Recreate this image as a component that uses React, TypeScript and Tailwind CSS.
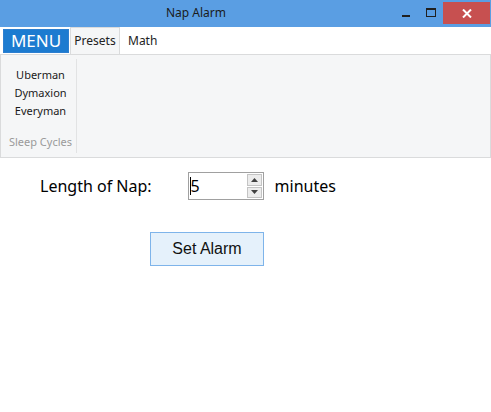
import { useState } from "react";

const presets = ["Uberman", "Dymaxion", "Everyman"];

export default function App() {
  const [minutes, setMinutes] = useState(5);

  return (
    <div className="flex h-[412px] w-[491px] flex-col bg-white font-['Noto_Sans','Open_Sans',sans-serif] text-black">
      {/* title bar */}
      <div className="relative flex h-[27px] shrink-0 items-start bg-[#5a9ee3]">
        <div className="w-[392px] pt-[4px] text-center text-[12px] leading-[18px] text-[#1b1b1b]">
          Nap Alarm
        </div>
        <div className="ml-auto flex items-start">
          <div className="flex h-[24px] w-[27px] items-center justify-center">
            <div className="mt-[7px] h-[2px] w-[8px] bg-[#202020]" />
          </div>
          <div className="flex h-[24px] w-[24px] items-center justify-center">
            <div className="h-[9px] w-[10px] border border-t-2 border-[#202020]" />
          </div>
          <div className="mr-[1px] mt-[2px] flex h-[22px] w-[47px] items-center justify-center bg-[#c75050]">
            <svg width="10" height="9" viewBox="0 0 10 9">
              <path d="M1 0.5 L9 8.5 M9 0.5 L1 8.5" stroke="white" strokeWidth="2" />
            </svg>
          </div>
        </div>
      </div>

      {/* menu row */}
      <div className="flex h-[27px] shrink-0 items-end">
        <button
          type="button"
          className="ml-[3px] mb-[1px] h-[24px] w-[66px] border border-[#2d7fd0] bg-[#1c7bd0] text-[17px] leading-[22px] text-white"
        >
          MENU
        </button>
        <div className="ml-[1px] flex h-[27px] w-[50px] items-center justify-center border border-b-0 border-[#dadbdc] bg-[#f5f6f7] text-[12px] text-[#222]">
          Presets
        </div>
        <div className="ml-[8px] flex h-[27px] items-center text-[12px] text-[#222]">Math</div>
      </div>

      {/* ribbon */}
      <div className="flex h-[104px] shrink-0 border border-[#dadbdc] bg-[#f5f6f7] px-[4px] pt-[4px]">
        <div className="flex h-[94px] w-[72px] flex-col items-center border-r border-[#e2e3e4]">
          <div className="mt-[7px] flex flex-col items-center gap-[1px] text-[11px] leading-[17px] text-[#1a1a1a]">
            {presets.map((p) => (
              <span key={p}>{p}</span>
            ))}
          </div>
          <div className="mt-auto mb-[3px] text-[11px] leading-[16px] text-[#9a9a9a]">Sleep Cycles</div>
        </div>
      </div>

      {/* content */}
      <div className="flex items-center pl-[40px] pt-[14px]">
        <span className="text-[16px] leading-[20px]">Length of Nap:</span>
        <div className="ml-[36px] flex h-[28px] w-[76px] items-stretch border border-[#a0a0a0] bg-white">
          <div className="flex flex-1 items-center pl-[1px] text-[16px]">
            <span className="h-[18px] w-[1px] bg-black" />
            <span className="leading-[18px]">{minutes}</span>
          </div>
          <div className="my-[1px] mr-[1px] flex w-[15px] flex-col gap-[1px]">
            <button
              type="button"
              onClick={() => setMinutes((m) => m + 1)}
              className="flex flex-1 items-center justify-center border border-[#c4c4c4] bg-[#ececec]"
            >
              <svg width="7" height="4" viewBox="0 0 7 4">
                <path d="M0 4 L3.5 0 L7 4 Z" fill="#404040" />
              </svg>
            </button>
            <button
              type="button"
              onClick={() => setMinutes((m) => Math.max(1, m - 1))}
              className="flex flex-1 items-center justify-center border border-[#c4c4c4] bg-[#ececec]"
            >
              <svg width="7" height="4" viewBox="0 0 7 4">
                <path d="M0 0 L7 0 L3.5 4 Z" fill="#404040" />
              </svg>
            </button>
          </div>
        </div>
        <span className="ml-[11px] text-[16px] leading-[20px]">minutes</span>
      </div>

      <div className="pl-[150px] pt-[32px]">
        <button
          type="button"
          className="h-[34px] w-[114px] border border-[#7eb4ea] bg-[#e5f1fb] font-['Liberation_Sans',Arial,sans-serif] text-[16px] text-[#111]"
        >
          Set Alarm
        </button>
      </div>
    </div>
  );
}
